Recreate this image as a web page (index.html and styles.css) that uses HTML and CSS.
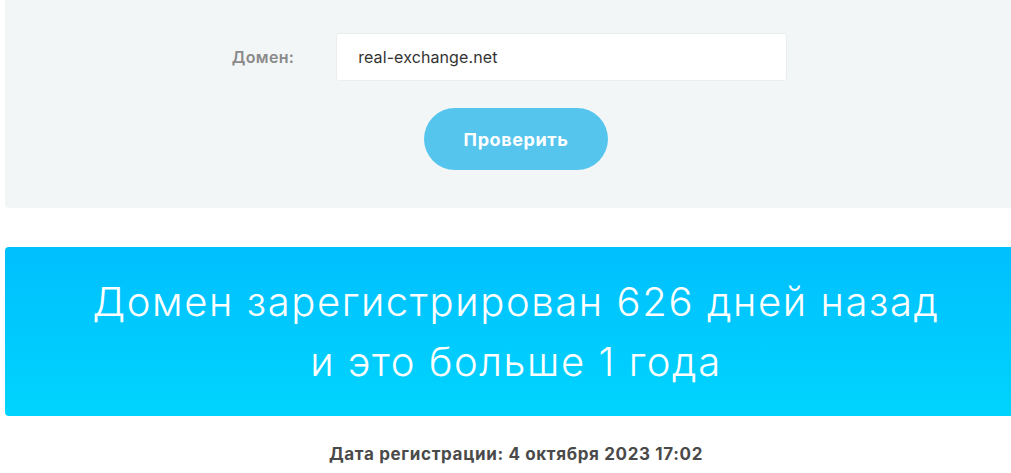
FILE: index.html
```html
<!DOCTYPE html>
<html>
<head>
    <title>Проверка возраста домена</title>
    <meta name="viewport" content="width=device-width, initial-scale=1.0">
    <link rel="stylesheet" href="styles.css">
</head>
<body>
    <div class="page">
        <div class="check-panel">
            <div class="form-row">
                <label for="domain">Домен:</label>
                <input type="text" id="domain" value="real-exchange.net">
            </div>
            <button class="check-button">Проверить</button>
        </div>

        <div class="result-banner">
            <p>Домен зарегистрирован 626 дней назад<br>и это больше 1 года</p>
        </div>

        <div class="reg-date">Дата регистрации: 4 октября 2023 17:02</div>
    </div>
</body>
</html>
```

FILE: styles.css
```css
:root {
    --panel: #f3f6f7;
    --accent: #56c5ee;
    --text: #444;
    --label: #8a8a8a;
}

html, body {
    overflow: hidden;
}

body {
    margin: 0;
    font-family: "Inter", "Open Sans", sans-serif;
    color: var(--text);
    background: #fff;
}

.page {
    width: 1022px;
    margin-left: 5px;
}

.check-panel {
    background: var(--panel);
    border-radius: 0 0 4px 4px;
    padding: 33px 0 38px;
    display: flex;
    flex-direction: column;
    align-items: center;
}

.form-row {
    display: flex;
    align-items: center;
    gap: 42px;
    margin-left: -13px;
}

label {
    font-size: 16px;
    font-weight: 600;
    letter-spacing: 0.3px;
    color: var(--label);
}

input[type="text"] {
    width: 451px;
    height: 48px;
    box-sizing: border-box;
    padding: 0 21px;
    border: 1px solid #ebeeef;
    border-radius: 3px;
    background: #fff;
    font-family: "Inter", sans-serif;
    font-size: 16px;
    letter-spacing: 0.1px;
    color: #333;
    outline: none;
}

.check-button {
    margin-top: 27px;
    width: 184px;
    height: 62px;
    border: none;
    border-radius: 31px;
    background: var(--accent);
    color: #fff;
    font-family: "Inter", sans-serif;
    font-size: 18px;
    font-weight: 700;
    letter-spacing: 0.6px;
    cursor: pointer;
}

.result-banner {
    margin-top: 39px;
    height: 169px;
    border-radius: 4px;
    background: linear-gradient(to bottom, #00bffe, #00d4fe);
    display: flex;
    align-items: center;
    justify-content: center;
}

.result-banner p {
    margin: 0;
    text-align: center;
    color: #fff;
    font-size: 40px;
    font-weight: 300;
    letter-spacing: 1.6px;
    line-height: 60px;
}

.reg-date {
    margin-top: 28px;
    text-align: center;
    font-size: 17px;
    font-weight: 700;
    letter-spacing: 0.65px;
    color: #4a4a4a;
}
```
